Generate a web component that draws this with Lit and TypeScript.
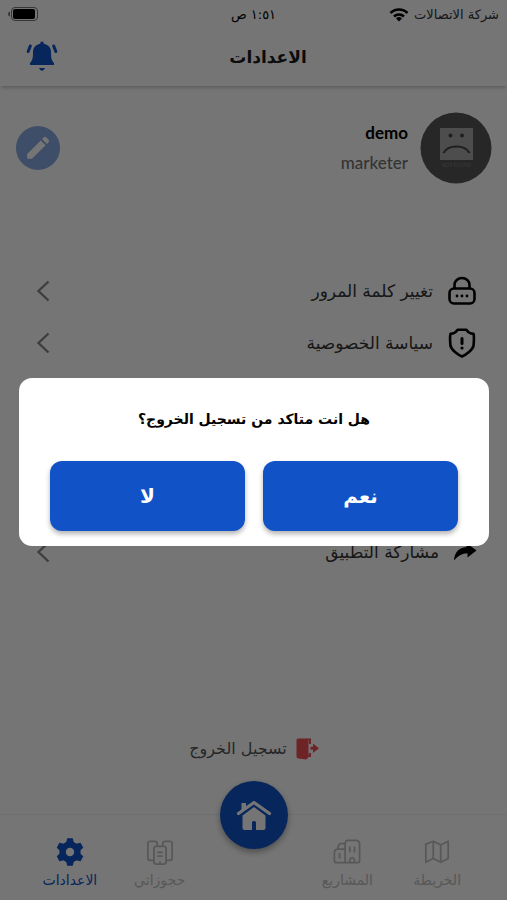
import { LitElement, html, css, svg } from "lit";
import { customElement } from "lit/decorators.js";

const chevron = html`<svg class="chevron" viewBox="0 0 14 22" width="14" height="22" aria-hidden="true">
  <path d="M12.5 1.5 2.5 11l10 9.500" fill="none" stroke="currentColor" stroke-width="2.400" />
</svg>`;

const lockIcon = html`<svg viewBox="0 0 30 30" width="30" height="30" aria-hidden="true">
  <g fill="none" stroke="currentColor" stroke-width="2.600">
    <path d="M7.500 13V9a7.500 7 0 0 1 15 0V13" />
    <rect x="2.500" y="12.500" width="25" height="15" rx="4.500" />
  </g>
  <g fill="currentColor"><circle cx="10" cy="20" r="1.400" /><circle cx="15" cy="20" r="1.400" /><circle cx="20" cy="20" r="1.400" /></g>
</svg>`;

const shieldIcon = html`<svg viewBox="0 0 30 30" width="30" height="30" aria-hidden="true">
  <path d="M10.500 1.800h9c1.500 2.500 4 3.800 7 4 .300 1 .300 9 0 12-.700 4-7.500 9-11.500 10.700C11 26.800 4.200 21.800 3.500 17.800c-.300-3-.300-11 0-12C6.500 5.600 9 4.300 10.500 1.800z"
    fill="none" stroke="currentColor" stroke-width="2.600" stroke-linejoin="round" />
  <path d="M15 10.500v5" stroke="currentColor" stroke-width="3" stroke-linecap="round" />
  <circle cx="15" cy="20" r="1.600" fill="currentColor" />
</svg>`;

const shareIcon = html`<svg viewBox="0 0 24 24" width="24" height="24" aria-hidden="true">
  <path d="M1 20.500C1.500 12 6 7.500 13.500 7V3L23.500 10.500l-9 7v-4.200C9 13.500 4.500 16 1 20.500z" fill="currentColor" />
</svg>`;

const mapIcon = svg`<path d="M3 6.500 11 3.500l8 4 8-4v18.500l-8 4-8-4-8 4zM11 3.500V22M19 7.500V26" />`;
const projectsIcon = svg`<path d="M13 26.500V6.500q0-4 3-4h8.500q4 0 4 4V24q0 2.500-2.500 2.500zM13 12H5.500Q1.500 12 1.500 15.500V24q0 2.500 2.500 2.500h9M5.500 12V8.500l2-2.500H13M18 9v6.500M23 9v6.500M7 16v6M18 26.500v-3.500q2.500-4 5 0v3.500" />`;
const bookingsIcon = svg`<rect x="8.500" y="9" width="13" height="19" rx="2.500" /><path d="M12 15.500h6M12 19.500h6M15 25v3M8.500 24H4.500Q2 24 2 21.500V6q0-2.500 2.500-2.500h5Q12 3.500 12 6v3M21.500 24h4q2.500 0 2.500-2.500V6q0-2.500-2.500-2.500h-5Q18 3.500 18 6v3" />`;

const outline = (shape: unknown) => html`<svg viewBox="0 0 30 30" width="28" height="28" aria-hidden="true">
  <g fill="none" stroke="currentColor" stroke-width="1.900" stroke-linejoin="round">${shape}</g>
</svg>`;

const gearIcon = html`<svg viewBox="2 2 20 20" width="28" height="28" aria-hidden="true">
  <path d="M12 4.600a7.400 7.400 0 1 1 0 14.800 7.400 7.400 0 0 1 0-14.800zm0 4.400a3 3 0 1 0 0 6 3 3 0 0 0 0-6z" fill="currentColor" fill-rule="evenodd" />
  <g fill="currentColor" stroke="currentColor" stroke-width="0.800" stroke-linejoin="round">
    ${[0, 60, 120, 180, 240, 300].map(
      (a) => svg`<path transform="rotate(${a} 12 12)" d="M10.300 2.600h3.400l.600 2.400 1.700 1.500H8L9.700 5z" />`
    )}
  </g>
</svg>`;

@customElement("app-root")
export class AppRoot extends LitElement {
  static styles = css`
    :host {
      display: block;
      color: #1c1c1c;
      background: #fff;
      font-family: "DejaVu Sans", sans-serif;
    }
    * { box-sizing: border-box; }
    svg { display: block; flex: none; }
    button { font: inherit; color: inherit; border: 0; padding: 0; background: none; cursor: pointer; }
    a { color: inherit; text-decoration: none; }
    h1, h2, p, ul { margin: 0; padding: 0; list-style: none; }

    .screen { min-height: 100vh; display: flex; flex-direction: column; }
    .status, .header { display: grid; align-items: center; }
    .status {
      grid-template-columns: 1fr auto 1fr;
      height: 28px;
      padding: 0 8px;
      font-size: 13px;
      color: #000;
    }
    .carrier { display: flex; align-items: center; gap: 5px; color: #333; }
    .wifi { color: #000; }
    .end { justify-self: end; }
    .header {
      grid-template-columns: 6fr auto 7fr;
      height: 58px;
      padding: 0 26px;
      box-shadow: 0 3px 3px -1px rgba(0, 0, 0, 0.2);
    }
    .header h1 { grid-column: 2; font-size: 17px; line-height: 24px; }
    .bell { color: #1153c6; }

    .main { flex: 1; display: flex; flex-direction: column; padding: 26px 15px 0 16px; }
    .profile { display: flex; align-items: center; gap: 12px; }
    .who { flex: 1; font-family: Lato, sans-serif; font-size: 17px; line-height: 30px; }
    .name { color: #000; font-weight: 700; }
    .role { color: #707070; font-weight: 500; }
    .edit {
      width: 44px; height: 44px; border-radius: 50%;
      display: grid; place-items: center;
      background: #88a9e2; color: #fff;
    }

    .menu { padding: 0 15px 0 20px; }
    .menu.first { margin-top: 81px; }
    .menu.second { margin-top: 157px; }
    .row {
      height: 52px; width: 100%;
      display: flex; align-items: center; gap: 14px;
      font-size: 17px; color: #333; text-align: start;
    }
    .row .label { flex: 1; }
    .row svg { color: #000; }
    .row .chevron { color: #888; }

    .logout {
      margin: auto 0 52px; align-self: center;
      display: flex; align-items: center; gap: 8px;
      font-size: 16px; line-height: 26px; color: #555;
    }

    .nav {
      height: 86px;
      display: grid;
      grid-template-columns: 1fr 1fr 98px 1fr 1fr;
      align-items: start;
      padding: 23px 25px 0;
      border-top: 1px solid #f2f2f2;
      font-size: 14px; line-height: 24px; color: #c0c0c0;
    }
    .tab { display: flex; flex-direction: column; align-items: center; gap: 2px; }
    .tab.active { color: #1153c6; }
    .home {
      width: 68px; height: 68px; margin-top: -57px; justify-self: center;
      border-radius: 50%;
      display: grid; place-items: center;
      background: #1153c6; color: #fff;
      box-shadow: 0 3px 6px rgba(0, 0, 0, 0.35);
    }

    .backdrop {
      position: fixed; inset: 0;
      display: flex; align-items: center;
      padding: 24px 18px 0 19px;
      background: rgba(0, 0, 0, 0.54);
    }
    .dialog {
      flex: 1;
      padding: 26px 31px 15px;
      border-radius: 13px;
      background: #fff; color: #000;
      text-align: center;
    }
    .dialog h2 { font-size: 14px; line-height: 30px; }
    .actions { display: grid; grid-template-columns: 1fr 1fr; gap: 18px; margin-top: 27px; }
    .actions button {
      height: 70px; border-radius: 12px;
      background: #1153c6; color: #fff;
      font-size: 20px; font-weight: 700;
      box-shadow: 0 3px 5px rgba(0, 0, 0, 0.3);
    }
  `;

  private row(icon: unknown, label: string) {
    return html`<li><button class="row">${icon}<span class="label">${label}</span>${chevron}</button></li>`;
  }

  private tab(icon: unknown, label: string, active = false) {
    return html`<a class="tab ${active ? "active" : ""}" href="#">${icon}<span>${label}</span></a>`;
  }

  render() {
    return html`
      <div class="screen" dir="rtl" lang="ar">
        <div class="status">
          <span class="carrier">شركة الاتصالات
            <svg class="wifi" viewBox="0 0 20 15" width="20" height="15" aria-hidden="true">
              <g fill="none" stroke="currentColor" stroke-width="2.600">
                <path d="M1.500 6a12 12 0 0 1 17 0" /><path d="M5 9.500a7.200 7.200 0 0 1 10 0" />
              </g>
              <path d="M10 14.500 7 11.500a4.300 4.300 0 0 1 6 0z" fill="currentColor" />
            </svg>
          </span>
          <span>١:٥١ ص</span>
          <svg class="end" viewBox="0 0 30 14" width="30" height="14" aria-hidden="true">
            <rect x="3.500" y="0.500" width="26" height="13" rx="3.500" fill="none" stroke="#777" />
            <rect x="5" y="2" width="22" height="10" rx="2" fill="#000" />
            <path d="M2 4.500v5Q0 9 0 7t2-2.500z" fill="#777" />
          </svg>
        </div>
        <header class="header">
          <h1>الاعدادات</h1>
          <button class="bell end" aria-label="الاعدادات">
            <svg viewBox="0 0 32 32" width="32" height="32" aria-hidden="true">
              <path d="M16 0.500q1.800 0 1.800 2.200c5 1 7.200 4.300 7.200 8.300 0 6 .500 8.500 3 11v2H4v-2c2.500-2.500 3-5 3-11 0-4 2.200-7.300 7.200-8.300q0-2.200 1.800-2.200zM13 27h6q-1 2.800-3 2.800T13 27z" fill="currentColor" />
              <path d="M4.300 5 2.200 10.500M27.700 5 29.800 10.500" stroke="currentColor" stroke-width="3" stroke-linecap="round" />
            </svg>
          </button>
        </header>
        <main class="main">
          <section class="profile">
            <svg viewBox="0 0 72 72" width="72" height="72" aria-hidden="true">
              <circle cx="36" cy="36" r="35.500" fill="#555" />
              <rect x="20" y="16" width="33" height="32" fill="#a8a8a8" />
              <circle cx="30.500" cy="23.500" r="2" fill="#444" /><circle cx="42" cy="23.500" r="2" fill="#444" />
              <path d="M23.500 41q3.500-6.500 13-6.500t13 6.500" fill="none" stroke="#444" stroke-width="2.200" />
              <text x="36.500" y="55" text-anchor="middle" font-family="Liberation Sans, sans-serif" font-size="5" fill="#808080">NOT FOUND</text>
            </svg>
            <div class="who">
              <p class="name">demo</p>
              <p class="role">marketer</p>
            </div>
            <button class="edit" aria-label="marketer">
              <svg viewBox="0 0 24 24" width="26" height="26" aria-hidden="true">
                <path d="M2 22v-4.500L14.500 5 19 9.500 6.500 22zM15.700 3.800l1.600-1.600q1.200-1 2.400 0l2.100 2.100q1 1.200 0 2.400l-1.600 1.600z" fill="currentColor" />
              </svg>
            </button>
          </section>
          <ul class="menu first">
            ${this.row(lockIcon, "تغيير كلمة المرور")}
            ${this.row(shieldIcon, "سياسة الخصوصية")}
          </ul>
          <ul class="menu second">
            ${this.row(shareIcon, "مشاركة التطبيق")}
          </ul>
          <button class="logout">
            <svg viewBox="0 0 24 24" width="24" height="24" aria-hidden="true">
              <path d="M3 1.500h8.500l2 2.500v16l-2 2.500L3 21.500Q1.500 21 1.500 19.500V3Q1.500 1.500 3 1.500z" fill="#f04e54" />
              <path d="M11 2.500h4V7M15 16v3h-3" fill="none" stroke="#f04e54" stroke-width="2" />
              <path d="M15.500 9.800h2.500V6.500l6 4.800-6 4.800v-3.300h-2.500z" fill="#f04e54" />
            </svg>
            تسجيل الخروج
          </button>
        </main>
        <nav class="nav">
          ${this.tab(outline(mapIcon), "الخريطة")}
          ${this.tab(outline(projectsIcon), "المشاريع")}
          <button class="home" aria-label="الاعدادات">
            <svg viewBox="0 0 36 32" width="36" height="32" aria-hidden="true">
              <path d="M2.500 14.500 18 3.500l15.500 11" fill="none" stroke="currentColor" stroke-width="3.200" stroke-linejoin="round" stroke-linecap="round" />
              <path d="M5.500 4h4.500v4L5.500 11.500zM18 8l11.500 8.500V29q0 2-2 2H20v-8q-2-2-4 0v8H8.500q-2 0-2-2V16.500z" fill="currentColor" />
            </svg>
          </button>
          ${this.tab(outline(bookingsIcon), "حجوزاتي")}
          ${this.tab(gearIcon, "الاعدادات", true)}
        </nav>
        <div class="backdrop">
          <section class="dialog" role="dialog" aria-modal="true" aria-labelledby="question">
            <h2 id="question">هل انت متاكد من تسجيل الخروج؟</h2>
            <div class="actions">
              <button>نعم</button>
              <button>لا</button>
            </div>
          </section>
        </div>
      </div>
    `;
  }
}
